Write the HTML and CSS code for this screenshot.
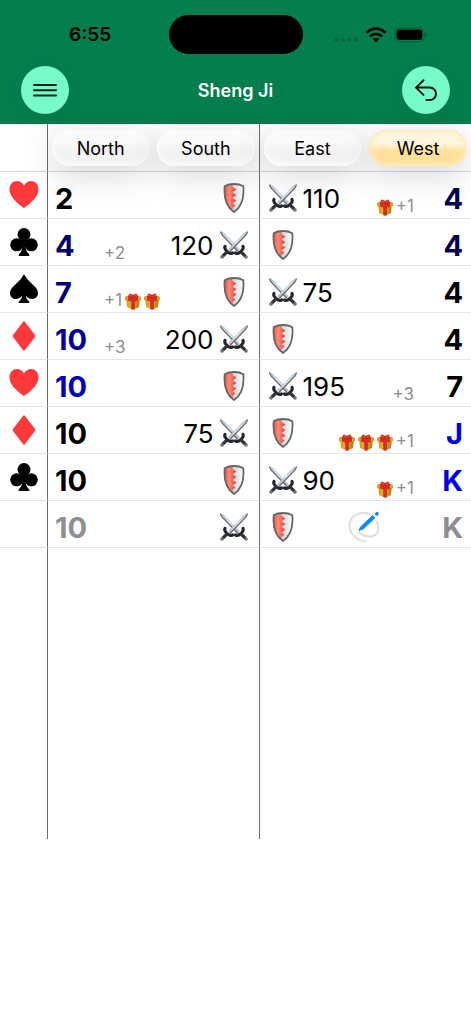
FILE: index.html
```html
<!DOCTYPE html>
<html lang="en">
<head>
<meta charset="utf-8">
<meta name="viewport" content="width=device-width, initial-scale=1">
<title>Sheng Ji</title>
<link rel="stylesheet" href="styles.css">
</head>
<body>
<svg class="sprite" aria-hidden="true">
  <defs>
    <linearGradient id="blade" x1="0" y1="0" x2="1" y2="1"><stop offset="0" stop-color="#a9c6d6"/><stop offset=".5" stop-color="#d3edf9"/><stop offset="1" stop-color="#a9bcc8"/></linearGradient>
    <linearGradient id="steel" x1="0" x2="1"><stop offset="0" stop-color="#c3c9cf"/><stop offset=".5" stop-color="#cfd6de"/><stop offset="1" stop-color="#ffffff"/></linearGradient>
    <linearGradient id="red" x1="0" x2="1"><stop offset="0" stop-color="#ee5440"/><stop offset=".4" stop-color="#ff8b78"/><stop offset="1" stop-color="#d93f2a"/></linearGradient>
    <linearGradient id="gold" x1="0" x2="1"><stop offset="0" stop-color="#d99a1e"/><stop offset=".5" stop-color="#f3b936"/><stop offset="1" stop-color="#bd7f14"/></linearGradient>
  </defs>
  <symbol id="heart" viewBox="0 0 30 30"><path d="M15 28C13 26.500 .5 18.500 .5 9.200C.5 4.500 3.800 1 8 1C11 1 13.700 2.800 15 5.500C16.300 2.800 19 1 22 1C26.200 1 29.500 4.500 29.500 9.200C29.500 18.500 17 26.500 15 28Z" fill="#ff383c"/></symbol>
  <symbol id="diamond" viewBox="0 0 30 30"><path d="M15 .3Q15.600 .3 16.200 1.200L26 14Q26.700 15 26 16L16.200 28.800Q15 30.500 13.800 28.800L4 16Q3.300 15 4 14L13.800 1.200Q14.400 .3 15 .3Z" fill="#ff383c"/></symbol>
  <symbol id="club" viewBox="0 0 30 30"><circle cx="15" cy="7.500" r="6.500"/><circle cx="7.700" cy="17.800" r="6.500"/><circle cx="22.300" cy="17.800" r="6.500"/><path d="M12 11H18V16H12ZM13.500 15H16.500C16.300 21 17 24.500 20 27Q21.200 29 19.500 29H10.500Q8.800 29 10 27C13 24.500 13.700 21 13.500 15Z"/></symbol>
  <symbol id="spade" viewBox="0 0 30 30"><path d="M15 .8C16 .8 16.300 2 17 3.200C20 8.500 29 13 29 19C29 22.500 26.500 25 23.300 25C20.300 25 18 23.500 16.700 21.500C17 24 18 26 20 27.200Q21.200 29 19.500 29H10.500Q8.800 29 10 27.200C12 26 13 24 13.300 21.500C12 23.500 9.700 25 6.700 25C3.500 25 1 22.500 1 19C1 13 10 8.500 13 3.200C13.700 2 14 .8 15 .8Z"/></symbol>
  <symbol id="swords" viewBox="0 0 28 28">
    <g id="sword"><path d="M.4.5L3.600 2L19.600 18.300L17.800 20.300L2 4Z" fill="url(#blade)"/><path d="M.4.5L2 4L17.800 20.300" fill="none" stroke="#75636c" stroke-width="1.300"/><path d="M.4.5L3.600 2L19.600 18.300" fill="none" stroke="#a3b4be" stroke-width=".6"/><path d="M23 15.500C24 17.500 22.300 19.300 20.500 20.900C18.800 22.400 17.500 23 15.500 22" fill="none" stroke="#24262d" stroke-width="3.200" stroke-linecap="round"/><path d="M20.500 20.500L25.500 25.300" stroke="#30313a" stroke-width="3.200"/><circle cx="26" cy="26" r="1.800" fill="#6d6f79"/></g>
    <use href="#sword" transform="matrix(-1 0 0 1 28 0)"/>
  </symbol>
  <symbol id="shield" viewBox="0 0 22 30"><path d="M11 1C14 1 18 1.800 20.300 3.300C21.200 13 20.300 22.500 11 29C1.700 22.500 .8 13 1.700 3.300C4 1.800 8 1 11 1Z" fill="url(#steel)"/><path d="M9.500 1V4L13.500 6.500L9.500 9.500L13.500 12L9.500 15L13.500 17.500L9.500 20.500L12.500 22.500L9.500 25V28C1.700 22 .8 13 1.700 3.300C4 2 7 1.300 9.500 1Z" fill="url(#red)"/><path d="M11 1C14 1 18 1.800 20.300 3.300C21.200 13 20.300 22.500 11 29C1.700 22.500 .8 13 1.700 3.300C4 1.800 8 1 11 1Z" fill="none" stroke="#666669" stroke-width="1.800"/></symbol>
  <symbol id="gift" viewBox="0 0 16 17"><path d="M1.200 5L8 7L14.800 5L14 14L8 16.700L2 14Z" fill="url(#gold)"/><path d="M8 7L14.800 5L14 14L8 16.700Z" fill="#a66709" opacity=".3"/><path d="M0 4L8 1.500L16 4V6.800L8 9L0 6.800Z" fill="#d3311e"/><path d="M0 4L3 3V7.600L0 6.800ZM13 3L16 4V6.800L13 7.600Z" fill="#e69c24"/><path d="M6.200 7H9.900V16L8 16.700L6.200 16Z" fill="#d62f20"/><path d="M8 4.500C5.500 4.500 3.300 3.300 4 1.500C5 .2 7.300 1.500 8 3.500C8.700 1.500 11 .2 12 1.500C12.700 3.300 10.500 4.500 8 4.500Z" fill="#f04431" stroke="#a61d16" stroke-width=".7"/></symbol>
</svg>

<header class="top">
  <div class="status">
    <time class="clock">6:55</time>
    <span class="island"></span>
    <div class="signals" aria-hidden="true">
      <svg width="24" height="5" viewBox="0 0 24 5" fill="#02633c"><circle cx="2.200" cy="2.500" r="2"/><circle cx="8.700" cy="2.500" r="2"/><circle cx="15.200" cy="2.500" r="2"/><circle cx="21.700" cy="2.500" r="2"/></svg>
      <svg width="22" height="16" viewBox="0 0 22 16" fill="none" stroke="#000" stroke-width="2.600"><path d="M1.300 5.800C7 .2 15 .2 20.700 5.800M4.900 9.400C8.400 6 13.600 6 17.100 9.400"/><path d="M7.700 12C9.500 10.200 12.500 10.200 14.300 12L11 15.500Z" fill="#000" stroke="none"/></svg>
      <svg width="34" height="16" viewBox="0 0 34 16"><rect x=".8" y=".8" width="29.400" height="14" rx="4.500" fill="none" stroke="#02573a" stroke-width="1"/><rect x="2.600" y="2.600" width="25.800" height="10.400" rx="3"/><path d="M31.600 5.500Q33.300 6.200 33.300 7.800T31.600 10.100Z" fill="#02573a"/></svg>
    </div>
  </div>
  <div class="bar">
    <button class="round" aria-label="Menu"><svg width="26" height="26" viewBox="0 0 26 26" stroke="#10241c" stroke-width="2" stroke-linecap="round"><path d="M2 8H24M2 13.300H24M2 18.600H24"/></svg></button>
    <h1 class="title">Sheng Ji</h1>
    <button class="round" aria-label="Undo"><svg width="26" height="26" viewBox="0 0 26 26" fill="none" stroke="#06150f" stroke-width="2" stroke-linecap="round" stroke-linejoin="round"><path d="M10.500 3.300L3 10.600L10.500 17.900M3.500 10.600H16.800A6.200 6.200 0 0 1 16.800 23H13.500"/></svg></button>
  </div>
</header>

<main>
<table class="board">
  <colgroup><col class="col-suit"><col><col></colgroup>
  <thead>
    <tr>
      <td></td>
      <th scope="col"><div class="players"><button class="player">North</button><button class="player">South</button></div></th>
      <th scope="col"><div class="players"><button class="player">East</button><button class="player active">West</button></div></th>
    </tr>
  </thead>
  <tbody>
    <tr>
      <td class="suit"><svg><use href="#heart"/></svg></td>
      <td><div class="team"><b class="rank">2</b><span class="note"></span><span class="points"></span><svg class="role"><use href="#shield"/></svg></div></td>
      <td><div class="team away"><svg class="role"><use href="#swords"/></svg><span class="points">110</span><span class="note"><svg class="gift"><use href="#gift"/></svg>+1</span><b class="rank navy1">4</b></div></td>
    </tr>
    <tr>
      <td class="suit"><svg><use href="#club"/></svg></td>
      <td><div class="team"><b class="rank navy2">4</b><span class="note">+2</span><span class="points">120</span><svg class="role"><use href="#swords"/></svg></div></td>
      <td><div class="team away"><svg class="role"><use href="#shield"/></svg><span class="points"></span><span class="note"></span><b class="rank navy1">4</b></div></td>
    </tr>
    <tr>
      <td class="suit"><svg><use href="#spade"/></svg></td>
      <td><div class="team"><b class="rank navy3">7</b><span class="note">+1<svg class="gift"><use href="#gift"/></svg><svg class="gift"><use href="#gift"/></svg></span><span class="points"></span><svg class="role"><use href="#shield"/></svg></div></td>
      <td><div class="team away"><svg class="role"><use href="#swords"/></svg><span class="points">75</span><span class="note"></span><b class="rank">4</b></div></td>
    </tr>
    <tr>
      <td class="suit"><svg><use href="#diamond"/></svg></td>
      <td><div class="team"><b class="rank navy4">10</b><span class="note">+3</span><span class="points">200</span><svg class="role"><use href="#swords"/></svg></div></td>
      <td><div class="team away"><svg class="role"><use href="#shield"/></svg><span class="points"></span><span class="note"></span><b class="rank">4</b></div></td>
    </tr>
    <tr>
      <td class="suit"><svg><use href="#heart"/></svg></td>
      <td><div class="team"><b class="rank navy5">10</b><span class="note"></span><span class="points"></span><svg class="role"><use href="#shield"/></svg></div></td>
      <td><div class="team away"><svg class="role"><use href="#swords"/></svg><span class="points">195</span><span class="note">+3</span><b class="rank">7</b></div></td>
    </tr>
    <tr>
      <td class="suit"><svg><use href="#diamond"/></svg></td>
      <td><div class="team"><b class="rank">10</b><span class="note"></span><span class="points">75</span><svg class="role"><use href="#swords"/></svg></div></td>
      <td><div class="team away"><svg class="role"><use href="#shield"/></svg><span class="points"></span><span class="note"><svg class="gift"><use href="#gift"/></svg><svg class="gift"><use href="#gift"/></svg><svg class="gift"><use href="#gift"/></svg>+1</span><b class="rank blue">J</b></div></td>
    </tr>
    <tr>
      <td class="suit"><svg><use href="#club"/></svg></td>
      <td><div class="team"><b class="rank">10</b><span class="note"></span><span class="points"></span><svg class="role"><use href="#shield"/></svg></div></td>
      <td><div class="team away"><svg class="role"><use href="#swords"/></svg><span class="points">90</span><span class="note"><svg class="gift"><use href="#gift"/></svg>+1</span><b class="rank blue">K</b></div></td>
    </tr>
    <tr>
      <td class="suit"></td>
      <td><div class="team"><b class="rank pending">10</b><span class="note"></span><span class="points"></span><svg class="role"><use href="#swords"/></svg></div></td>
      <td><div class="team away"><svg class="role"><use href="#shield"/></svg><span class="points"></span><span class="entry"><button class="edit" aria-label="Enter score"><svg width="32" height="32" viewBox="0 0 32 32" fill="none"><path d="M23.500 4.500C18 .3 8 .8 3.500 7.500C-1 15 2.500 23 8 26.800C11 29 15 30.700 18.800 30.500" stroke="#dededf" stroke-width="2"/><path d="M28.500 10C32.500 19 29 25.300 22 25.500C17.500 25.700 13 23.500 10.500 20.500" stroke="#dededf" stroke-width="2"/><path d="M11 19.500L12.800 15.700L24.700 4.500L27 6.800L15 18Z" fill="#0a88ff" stroke="#0a88ff" stroke-linejoin="round"/><path d="M28.700 3L29 2.700" stroke="#0a88ff" stroke-width="3.500" stroke-linecap="round"/></svg></button></span><b class="rank pending">K</b></div></td>
    </tr>
    <tr class="rest"><td></td><td></td><td></td></tr>
  </tbody>
</table>
</main>
</body>
</html>
```

FILE: styles.css
```css
* { box-sizing: border-box; }

body {
  margin: 0;
  background: #fff;
  color: #000;
  font-family: Inter, "Liberation Sans", sans-serif;
}

button {
  border: 0;
  padding: 0;
  background: none;
  color: inherit;
  font: inherit;
}

svg { display: block; }

.sprite {
  position: absolute;
  width: 0;
  height: 0;
}

/* Status and navigation bars */
.top {
  background: #037e4c;
  padding: 15px 21px 10px;
}

.status {
  display: grid;
  grid-template-columns: 1fr 134px 1fr;
  align-items: center;
  height: 39px;
}

.clock {
  padding-left: 48px;
  font-size: 19px;
  font-weight: 600;
}

.island {
  height: 39px;
  border-radius: 20px;
  background: #000;
}

.signals {
  display: flex;
  align-items: center;
  gap: 7px;
  padding-left: 31px;
}

.signals svg { flex: none; }
.signals svg:first-child { margin-top: 10px; }

.bar {
  display: flex;
  align-items: center;
  justify-content: space-between;
  margin-top: 12px;
}

.round {
  display: grid;
  place-items: center;
  width: 48px;
  height: 48px;
  border-radius: 50%;
  background: #78fbcb;
  box-shadow: 0 4px 24px rgba(0, 0, 0, .06);
}

.title {
  margin: 0;
  color: #fff;
  font-size: 18px;
  font-weight: 600;
}

/* Score board */
.board {
  width: 100%;
  table-layout: fixed;
  border-spacing: 0;
}

.col-suit { width: 48px; }

.board th,
.board td {
  height: 47px;
  padding: 0;
  border-bottom: 1px solid #e5e5e6;
  border-right: 1px solid #6c6c6c;
}

.board thead td,
.board thead th {
  height: 48px;
  border-bottom-color: #d6d6d6;
  font-weight: 400;
}

.board tr > :last-child { border-right: 0; }

.board .rest td {
  height: 291px;
  border-bottom: 0;
}

.players {
  display: flex;
  gap: 8px;
  padding: 0 4px;
}

.player {
  flex: 1;
  height: 36px;
  padding-top: 2px;
  border-radius: 18px;
  background: linear-gradient(#fafafa 30%, #f2f2f2 60%, #f5f5f5);
  box-shadow: 0 8px 32px rgba(0, 0, 0, .17), inset 0 0 5px 2px #fafafa, inset 0 0 0 1px #fff;
  font-size: 18px;
}

.player.active {
  background: linear-gradient(#fff6e2 35%, #ffe09c 60%, #ffdf98);
  box-shadow: 0 8px 32px rgba(0, 0, 0, .17), inset 0 0 5px 2px #ffedc4, inset 0 0 0 1px #ffdf98;
}

.suit svg {
  width: 30px;
  height: 30px;
  margin: 0 auto;
}

.team {
  display: grid;
  grid-template-columns: 49px 1fr auto 28px;
  align-items: center;
  height: 46px;
  padding: 6px 11px 0 7px;
}

.team.away {
  grid-template-columns: 28px auto 1fr 49px;
  padding: 6px 8px 0 9px;
}

.rank {
  padding-top: 1px;
  font-size: 29px;
  font-weight: 700;
  line-height: 32px;
}

.away .rank { text-align: right; }

.points {
  padding: 1px 6px 0;
  font-size: 26px;
  line-height: 32px;
}

.role {
  width: 28px;
  height: 30px;
}

.note {
  display: flex;
  align-items: center;
  gap: 3px;
  padding-top: 16px;
  color: #8e8e93;
  font-size: 17px;
  line-height: 20px;
}

.away .note { justify-content: flex-end; }

.gift {
  width: 16px;
  height: 17px;
  margin-top: 2px;
}

.entry {
  display: flex;
  justify-content: center;
  padding-left: 6px;
}

.navy1 { color: #00004c; }
.navy2 { color: #000066; }
.navy3 { color: #00007f; }
.navy4 { color: #000099; }
.navy5 { color: #0000b8; }
.blue { color: #0000e6; }
.pending { color: #8e8e93; }
```
